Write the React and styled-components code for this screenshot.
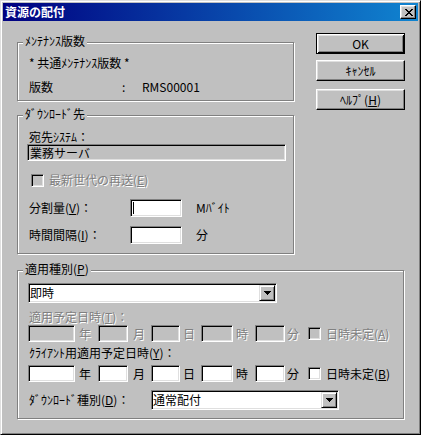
import React from "react";
import styled, { createGlobalStyle, css } from "styled-components";

const FACE = "#c0c0c0";
const FONT = `"Noto Sans CJK JP", "Noto Sans", sans-serif`;

const GlobalStyle = createGlobalStyle`
  html, body { margin: 0; padding: 0; background: ${FACE}; }
  body { font-family: ${FONT}; font-size: 12px; }
`;

const sunken = css`
  box-sizing: border-box;
  border: 1px solid;
  border-color: #808080 #fff #fff #808080;
  box-shadow: inset 1px 1px #000, inset -1px -1px #dfdfdf;
`;

const raised = css`
  box-sizing: border-box;
  border: 1px solid;
  border-color: #dfdfdf #000 #000 #dfdfdf;
  box-shadow: inset 1px 1px #fff, inset -1px -1px #808080;
`;

const disabledText = css`
  color: #808080;
  text-shadow: 1px 1px #fff;
`;

const Window = styled.div`
  box-sizing: border-box;
  width: 421px;
  height: 435px;
  background: ${FACE};
  border: 1px solid;
  border-color: #dfdfdf #000 #000 #dfdfdf;
  box-shadow: inset 1px 1px #fff, inset -1px -1px #808080;
  padding: 2px;
  display: flex;
  flex-direction: column;
  font-family: ${FONT};
  font-size: 12px;
  color: #000;
`;

const TitleBar = styled.div`
  flex: none;
  height: 18px;
  background: linear-gradient(to right, #000080, #1084d0);
  display: flex;
  align-items: center;
  justify-content: space-between;
  padding: 0 2px 0 2px;
  color: #fff;
  font-weight: bold;
  font-size: 12px;
  line-height: 18px;
`;

const CloseButton = styled.div`
  box-sizing: border-box;
  width: 16px;
  height: 14px;
  background: ${FACE};
  border: 1px solid;
  border-color: #fff #000 #000 #fff;
  box-shadow: inset -1px -1px #808080, inset 1px 1px #dfdfdf;
  display: flex;
  align-items: center;
  justify-content: center;
  padding-left: 1px;
`;

const Body = styled.div`
  flex: 1;
  display: flex;
  flex-direction: column;
  padding: 0 13px 0 14px;
`;

const Top = styled.div`
  display: flex;
  gap: 22px;
  align-items: flex-start;
`;

const LeftCol = styled.div`
  width: 277px;
  flex: none;
  display: flex;
  flex-direction: column;
`;

const ButtonCol = styled.div`
  width: 89px;
  flex: none;
  display: flex;
  flex-direction: column;
  padding-top: 12px;
`;

const Button = styled.div`
  box-sizing: border-box;
  width: 89px;
  height: 21px;
  margin-top: ${(p) => p.$mt || 0}px;
  background: ${FACE};
  color: #000;
  display: flex;
  align-items: center;
  justify-content: center;
  line-height: 14px;
  border: 1px solid;
  border-color: #fff #000 #000 #fff;
  box-shadow: inset -1px -1px #808080, inset 1px 1px #dfdfdf;
  ${(p) =>
    p.$default &&
    css`
      border: 1px solid #000;
      box-shadow: inset 1px 1px #fff, inset -1px -1px #000,
        inset 2px 2px #dfdfdf, inset -2px -2px #808080;
    `}
`;

const Group = styled.div`
  position: relative;
  box-sizing: border-box;
  margin-top: ${(p) => p.$mt}px;
  ${(p) => p.$w && `width: ${p.$w}px;`}
  border: 1px solid #808080;
  box-shadow: inset 1px 1px #fff, 1px 1px #fff;
  padding: ${(p) => p.$pad};
  display: flex;
  flex-direction: column;
`;

const GroupTitle = styled.span`
  position: absolute;
  top: -9px;
  left: 5px;
  padding: 0 2px;
  background: ${FACE};
  line-height: 14px;
  white-space: nowrap;
`;

const InfoRow = styled.div`
  display: grid;
  grid-template-columns: 93px 20px auto;
  height: 24px;
  align-items: center;
  line-height: 14px;
`;

const Label = styled.div`
  line-height: 14px;
  height: 14px;
  margin-top: ${(p) => p.$mt || 0}px;
  white-space: nowrap;
  ${(p) => p.$disabled && disabledText}
`;

const ReadOnlyField = styled.div`
  ${sunken};
  width: 259px;
  height: 17px;
  margin-left: -2px;
  background: ${FACE};
  padding-left: 2px;
  line-height: 15px;
  white-space: nowrap;
`;

const CheckRow = styled.div`
  display: flex;
  align-items: center;
  height: 16px;
  margin-top: ${(p) => p.$mt || 0}px;
  margin-left: ${(p) => p.$ml || 0}px;
`;

const CheckBox = styled.div`
  ${sunken};
  flex: none;
  width: 13px;
  height: 13px;
  background: ${(p) => (p.$disabled ? FACE : "#fff")};
`;

const CheckText = styled.span`
  margin-left: 5px;
  line-height: 14px;
  white-space: nowrap;
  ${(p) => p.$disabled && disabledText}
`;

const EditRow = styled.div`
  display: flex;
  align-items: center;
  height: 18px;
  margin-top: ${(p) => p.$mt}px;
`;

const RowLabel = styled.span`
  flex: none;
  width: ${(p) => p.$w}px;
  line-height: 14px;
  white-space: nowrap;
`;

const EditBox = styled.div`
  ${sunken};
  flex: none;
  width: ${(p) => p.$w}px;
  height: ${(p) => p.$h || 18}px;
  background: ${(p) => (p.$disabled ? FACE : "#fff")};
  display: flex;
  align-items: center;
`;

const Caret = styled.span`
  width: 1px;
  height: 12px;
  margin-left: 2px;
  background: #000;
`;

const Unit = styled.span`
  flex: none;
  box-sizing: border-box;
  width: ${(p) => p.$w || "auto"};
  padding-left: ${(p) => p.$pl}px;
  line-height: 14px;
  white-space: nowrap;
  ${(p) => p.$disabled && disabledText}
`;

const Combo = styled.div`
  ${sunken};
  flex: none;
  width: ${(p) => p.$w}px;
  height: 20px;
  margin-left: ${(p) => p.$ml || 0}px;
  margin-top: ${(p) => p.$mt || 0}px;
  padding: 1px;
  background: #fff;
  display: flex;
  align-items: center;
`;

const ComboText = styled.span`
  flex: 1;
  padding-left: 0;
  line-height: 14px;
  white-space: nowrap;
`;

const DropButton = styled.div`
  ${raised};
  flex: none;
  width: 16px;
  height: 16px;
  background: ${FACE};
  display: flex;
  align-items: center;
  justify-content: center;
`;

const DateRow = styled.div`
  display: flex;
  align-items: center;
  height: 17px;
  margin-top: ${(p) => p.$mt}px;
  margin-left: -1px;
`;

const DlRow = styled.div`
  display: flex;
  align-items: center;
  height: 20px;
  margin-top: 8px;
`;

const Arrow = () => (
  <svg width="7" height="4" viewBox="0 0 7 4" shapeRendering="crispEdges">
    <path d="M0 0h7v1H0zM1 1h5v1H1zM2 2h3v1H2zM3 3h1v1H3z" fill="#000" />
  </svg>
);

const CloseIcon = () => (
  <svg width="8" height="7" viewBox="0 0 8 7" shapeRendering="crispEdges">
    <path
      d="M0 0h2v1H0zM6 0h2v1H6zM1 1h2v1H1zM5 1h2v1H5zM2 2h4v1H2zM3 3h2v1H3zM2 4h4v1H2zM1 5h2v1H1zM5 5h2v1H5zM0 6h2v1H0zM6 6h2v1H6z"
      fill="#000"
    />
  </svg>
);

const DateInputs = ({ disabled, mt, check }) => (
  <DateRow $mt={mt}>
    <EditBox $w={47} $h={17} $disabled={disabled} />
    <Unit $w="23px" $pl={4} $disabled={disabled}>年</Unit>
    <EditBox $w={30} $h={17} $disabled={disabled} />
    <Unit $w="23px" $pl={5} $disabled={disabled}>月</Unit>
    <EditBox $w={29} $h={17} $disabled={disabled} />
    <Unit $w="21px" $pl={3} $disabled={disabled}>日</Unit>
    <EditBox $w={32} $h={17} $disabled={disabled} />
    <Unit $w="22px" $pl={3} $disabled={disabled}>時</Unit>
    <EditBox $w={30} $h={17} $disabled={disabled} />
    <Unit $w="23px" $pl={2} $disabled={disabled}>分</Unit>
    <CheckBox $disabled={disabled} />
    <CheckText $disabled={disabled}>
      日時未定(<u>{check}</u>)
    </CheckText>
  </DateRow>
);

export default function App() {
  return (
    <>
      <GlobalStyle />
      <Window>
        <TitleBar>
          <span>資源の配付</span>
          <CloseButton>
            <CloseIcon />
          </CloseButton>
        </TitleBar>
        <Body>
          <Top>
            <LeftCol>
              <Group $mt={21} $pad="8px 0 1px 11px">
                <GroupTitle>ﾒﾝﾃﾅﾝｽ版数</GroupTitle>
                <InfoRow>
                  <span style={{ gridColumn: "1 / 4" }}>* 共通ﾒﾝﾃﾅﾝｽ版数 *</span>
                </InfoRow>
                <InfoRow>
                  <span>版数</span>
                  <span>:</span>
                  <span>RMS00001</span>
                </InfoRow>
              </Group>
              <Group $mt={14} $pad="14px 7px 9px 11px">
                <GroupTitle>ﾀﾞｳﾝﾛｰﾄﾞ先</GroupTitle>
                <Label>宛先ｼｽﾃﾑ：</Label>
                <ReadOnlyField>業務サーバ</ReadOnlyField>
                <CheckRow $mt={11} $ml={2}>
                  <CheckBox $disabled />
                  <CheckText $disabled>
                    最新世代の再送(<u>E</u>)
                  </CheckText>
                </CheckRow>
                <EditRow $mt={11}>
                  <RowLabel $w={101}>
                    分割量(<u>V</u>)：
                  </RowLabel>
                  <EditBox $w={52}>
                    <Caret />
                  </EditBox>
                  <Unit $pl={14}>Mﾊﾞｲﾄ</Unit>
                </EditRow>
                <EditRow $mt={9}>
                  <RowLabel $w={101}>
                    時間間隔(<u>I</u>)：
                  </RowLabel>
                  <EditBox $w={52} />
                  <Unit $pl={14}>分</Unit>
                </EditRow>
              </Group>
            </LeftCol>
            <ButtonCol>
              <Button $default>OK</Button>
              <Button $mt={6}>ｷｬﾝｾﾙ</Button>
              <Button $mt={8}>
                ﾍﾙﾌﾟ(<u>H</u>)
              </Button>
            </ButtonCol>
          </Top>
          <Group $mt={16} $w={387} $pad="12px 0 8px 11px">
            <GroupTitle>
              適用種別(<u>P</u>)
            </GroupTitle>
            <Combo $w={249} $ml={-1}>
              <ComboText>即時</ComboText>
              <DropButton>
                <Arrow />
              </DropButton>
            </Combo>
            <Label $mt={7} $disabled>
              適用予定日時(<u>T</u>)：
            </Label>
            <DateInputs disabled mt={1} check="A" />
            <Label $mt={4}>
              ｸﾗｲｱﾝﾄ用適用予定日時(<u>Y</u>)：
            </Label>
            <DateInputs mt={5} check="B" />
            <DlRow>
              <RowLabel $w={122}>
                ﾀﾞｳﾝﾛｰﾄﾞ種別(<u>D</u>)：
              </RowLabel>
              <Combo $w={188}>
                <ComboText>通常配付</ComboText>
                <DropButton>
                  <Arrow />
                </DropButton>
              </Combo>
            </DlRow>
          </Group>
        </Body>
      </Window>
    </>
  );
}
